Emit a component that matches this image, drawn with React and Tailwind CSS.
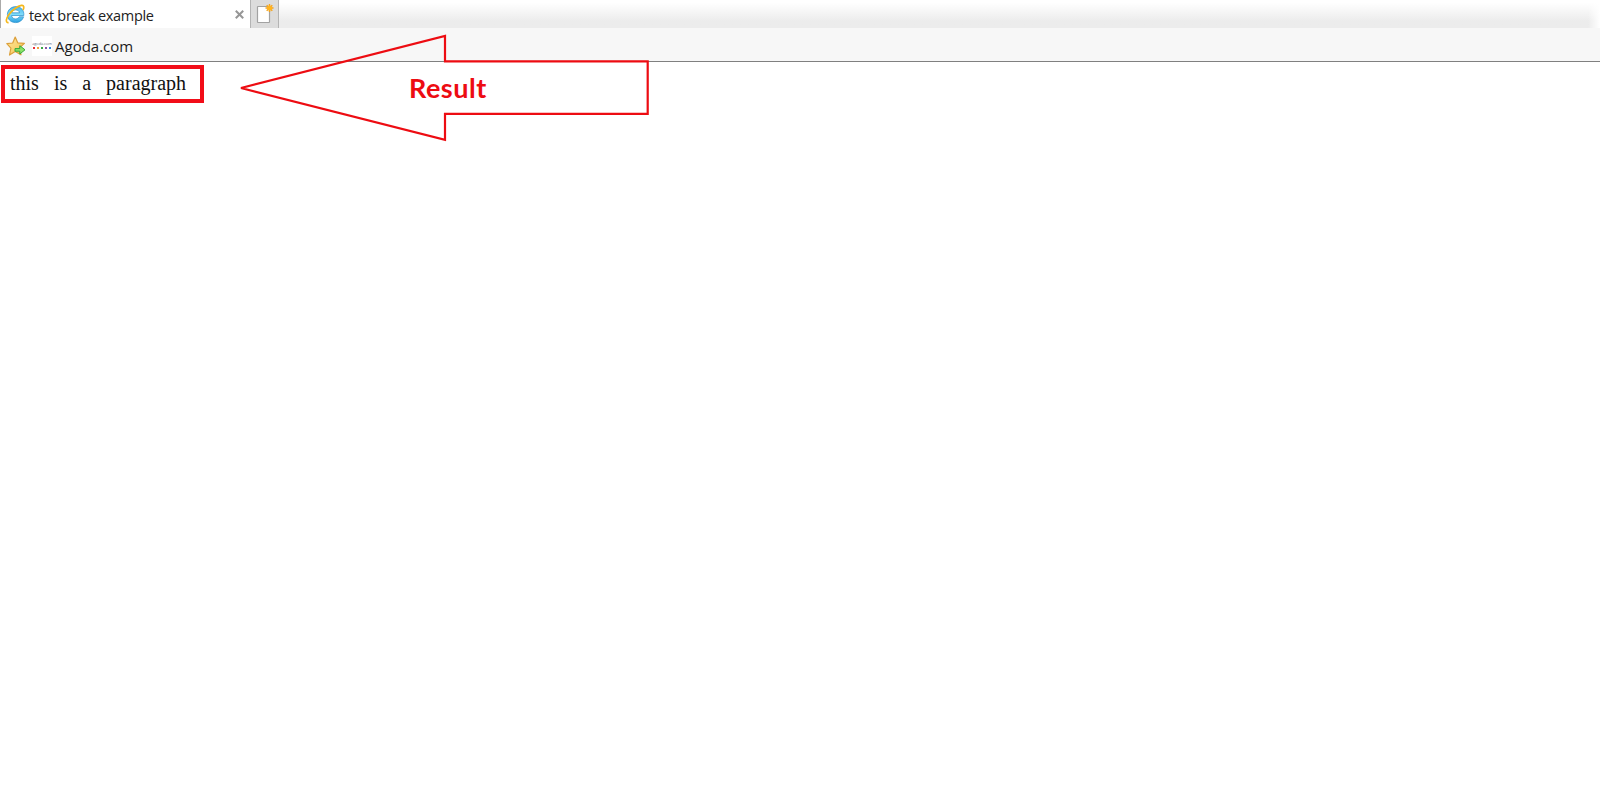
import React from 'react';

const IeLogo = () => (
  <svg className="w-5 h-5 shrink-0" viewBox="0 0 20 20" fill="none">
    <defs>
      <linearGradient id="ie-blue" x1="0" y1="0" x2="0" y2="1">
        <stop offset="0" stopColor="#4db5e8" />
        <stop offset="0.5" stopColor="#7fdcfb" />
        <stop offset="1" stopColor="#2a9fe0" />
      </linearGradient>
    </defs>
    <path d="M18.6 12.8H14.2C13.3 14.2 12.1 14.9 10.5 14.9C8.2 14.9 6.8 13.5 6.6 11.5H18.8C19.3 6.2 15.9 2.6 10.9 2.6C6.2 2.6 2.4 6 2.4 10.6C2.4 15.4 6 18.6 10.6 18.6C14.5 18.6 17.5 16.4 18.6 12.8ZM6.8 8.8C7.3 7 8.7 5.9 10.7 5.9C12.8 5.9 14.2 7 14.5 8.8Z" fill="url(#ie-blue)" stroke="#2b8fca" strokeWidth="0.7" fillRule="evenodd" />
    <path d="M3.6 18.6C.2 18.8 1 14.5 3.6 10.9C6.6 6.6 12.6 2 16.4 1.4C19.2 1 19.3 3.5 18 6" stroke="#f5b81c" strokeWidth="1.7" />
  </svg>
);

const FavoriteStar = () => (
  <svg className="w-5 h-5 shrink-0" viewBox="0 0 20 20">
    <defs>
      <linearGradient id="star-gold" x1="0" y1="0" x2="1" y2="1">
        <stop offset="0" stopColor="#fdeaa0" />
        <stop offset="1" stopColor="#f6c04a" />
      </linearGradient>
    </defs>
    <path d="M9.2 1L11.7 6.8L18.4 7.4L13.4 11.9L15 18.8L9.2 15.4L3.5 19L4.9 12.2L.8 7.7L6.7 7Z" fill="url(#star-gold)" stroke="#dca03c" strokeWidth="1.2" strokeLinejoin="round" />
    <path d="M9 12.6H13.8V9.7L19 13.8L13.8 18V15.2H9Z" fill="#8be468" stroke="#37a83a" strokeWidth="1" strokeLinejoin="round" />
  </svg>
);

const AgodaIcon = () => (
  <div className="w-5 h-5 shrink-0 bg-white flex flex-col items-center pt-1.5 overflow-hidden">
    <span className="h-1 text-[4px] leading-[4px] tracking-[-0.1px] text-gray-500 font-['Open_Sans',sans-serif]">agoda.com</span>
    <div className="flex gap-[2px] mt-[1px]">
      <i className="w-[2px] h-[2px] bg-[#e8303a]" />
      <i className="w-[2px] h-[2px] bg-[#f0a040]" />
      <i className="w-[2px] h-[2px] bg-[#38a848]" />
      <i className="w-[2px] h-[2px] bg-[#8a54a8]" />
      <i className="w-[2px] h-[2px] bg-[#3488d8]" />
    </div>
  </div>
);

const NewTabIcon = () => (
  <svg className="w-[18px] h-5 shrink-0" viewBox="0 0 18 20">
    <rect x="1.5" y="2.5" width="12" height="16" rx="0.5" fill="#fff" stroke="#a2a2a2" strokeWidth="1.2" />
    <path d="M13.5 0V8M9.5 4H17.5M10.7 1.2L16.3 6.8M16.3 1.2L10.7 6.8" stroke="#f5a31c" strokeWidth="1.4" />
    <circle cx="13.5" cy="4" r="2.5" fill="#ffb41f" />
  </svg>
);

const TabStrip = () => (
  <div className="flex h-7 bg-linear-to-b from-white from-10% to-[#ececec] to-75%">
    <div className="w-[250px] flex items-center bg-white border-l border-[#aaa] pl-1">
      <IeLogo />
      <span className="ml-[4px] mt-[3px] text-[14.5px] leading-5 tracking-[-0.3px] text-[#222]">text break example</span>
      <svg className="w-[9px] h-[9px] ml-auto mr-[6px]" viewBox="0 0 8 8">
        <path d="M.7 .7L7.3 7.3M7.3 .7L.7 7.3" stroke="#969696" strokeWidth="1.8" />
      </svg>
    </div>
    <div className="w-[29px] bg-[#dcdcdc] border-x border-[#b4b4b4] flex justify-center pt-1 pl-px">
      <NewTabIcon />
    </div>
    <div className="ml-auto w-3 bg-linear-to-r from-transparent to-white" />
  </div>
);

const FavoritesBar = () => (
  <div className="h-[34px] flex items-center bg-[#f7f7f7] border-b border-[#808080] pl-[6px] pt-0.5">
    <FavoriteStar />
    <div className="ml-[6px]">
      <AgodaIcon />
    </div>
    <span className="ml-[3px] mt-px text-[15px] leading-5 text-[#1c1c1c]">Agoda.com</span>
  </div>
);

const ResultArrow = () => (
  <div className="absolute left-[240px] top-[34px] w-[410px] h-[108px]">
    <svg className="w-full h-full" viewBox="0 0 410 108" fill="none">
      <path d="M1 54L205 2V27.4H407.7V79.9H205V105.8Z" stroke="#ed0c12" strokeWidth="2.2" />
    </svg>
    <span className="absolute left-[169px] top-[38px] text-[27px] leading-8 tracking-[0.5px] font-bold text-[#ed0c12] font-['Lato',sans-serif]">Result</span>
  </div>
);

const App = () => {
  return (
    <div className="relative w-full h-[786px] bg-white overflow-hidden font-['Open_Sans',sans-serif]">
      <TabStrip />
      <FavoritesBar />
      <div className="pl-px pt-[3px]">
        <p className="w-[203px] h-[38px] border-4 border-[#f20d18] pl-[5px] pt-[3px] text-[20px] leading-[23px] whitespace-pre text-[#111] font-['Liberation_Serif',serif]">
          {'this   is   a   paragraph'}
        </p>
      </div>
      <ResultArrow />
    </div>
  );
};

export default App;
